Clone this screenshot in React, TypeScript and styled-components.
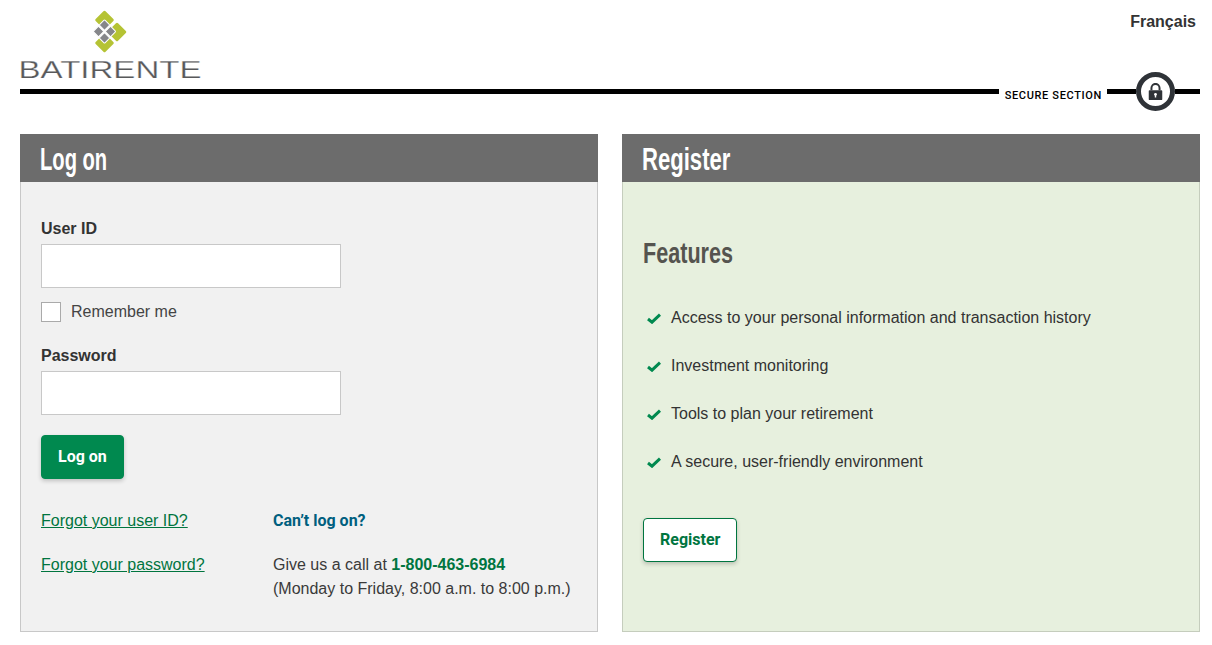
import React from 'react'
import styled, { createGlobalStyle } from 'styled-components'

const GlobalStyle = createGlobalStyle`
  html, body {
    margin: 0;
    padding: 0;
    background: #fff;
    color: #333;
    font-family: "Liberation Sans", Arial, sans-serif;
    font-size: 16px;
  }
`

const Page = styled.div`
  width: 1180px;
  height: 645px;
  padding-left: 20px;
  overflow: hidden;
`

const TopBar = styled.header`
  display: flex;
  justify-content: space-between;
  height: 82px;
`

const LogoWrap = styled.div`
  padding-top: 10px;
`

const LangLink = styled.a`
  margin: 13px 4px 0 0;
  font-weight: 700;
  line-height: 18px;
  color: #333;
`

const SecureRow = styled.div`
  display: flex;
  align-items: center;
  height: 19px;
  margin-bottom: 33px;
`

const Rule = styled.div<{ $width?: number }>`
  height: 5px;
  background: #000;
  flex: ${({ $width }) => ($width ? `0 0 ${$width}px` : '1')};
`

const SecureLabel = styled.span`
  padding: 8px 5px 0 6px;
  font-family: Roboto, sans-serif;
  font-size: 11px;
  font-weight: 500;
  letter-spacing: 0.65px;
  color: #000;
  white-space: nowrap;
`

const LockBadge = styled.div`
  flex: 0 0 39px;
  height: 39px;
  box-sizing: border-box;
  border: 5px solid #2f3338;
  border-radius: 50%;
  background: #fff;
  display: flex;
  align-items: center;
  justify-content: center;
`

const Columns = styled.main`
  display: grid;
  grid-template-columns: 578px 578px;
  gap: 24px;
`

const Panel = styled.section`
  height: 498px;
  display: flex;
  flex-direction: column;
`

const PanelTitle = styled.h2`
  margin: 0;
  height: 48px;
  padding-left: 20px;
  background: #6c6c6c;
  color: #fff;
  font-size: 32px;
  font-weight: 700;
  line-height: 50px;
`

// Oswald is not installed: a bold sans squeezed sideways stands in for it
const Squeezed = styled.span<{ $ratio: number }>`
  display: inline-block;
  transform: scaleX(${({ $ratio }) => $ratio});
  transform-origin: left center;
  white-space: nowrap;
`

const PanelBody = styled.div<{ $tone: string; $line: string }>`
  flex: 1;
  box-sizing: border-box;
  background: ${({ $tone }) => $tone};
  border: 1px solid ${({ $line }) => $line};
  border-top: 0;
  padding-left: 20px;
`

const LoginForm = styled.form`
  padding-top: 38px;
`

const FieldLabel = styled.label`
  display: block;
  font-weight: 700;
  line-height: 18px;
  margin-bottom: 6px;
`

const TextField = styled.input`
  display: block;
  box-sizing: border-box;
  width: 300px;
  height: 44px;
  border: 1px solid #c8c8c8;
  background: #fff;
  padding: 0 8px;
`

const RememberRow = styled.label`
  display: flex;
  align-items: center;
  gap: 10px;
  height: 20px;
  margin: 14px 0 25px;
  color: #444;
`

const CheckBox = styled.span`
  width: 20px;
  height: 20px;
  box-sizing: border-box;
  border: 1px solid #aaa;
  background: #fff;
`

const ActionButton = styled.button<{ $outline?: boolean }>`
  display: block;
  height: 44px;
  padding: 0 16px 2px;
  border-radius: 4px;
  border: 1px solid ${({ $outline }) => ($outline ? '#00753f' : '#00894f')};
  background: ${({ $outline }) => ($outline ? '#fff' : '#00894f')};
  color: ${({ $outline }) => ($outline ? '#00753f' : '#fff')};
  font-family: Roboto, sans-serif;
  font-size: 16px;
  font-weight: 700;
  box-shadow: 0 2px 4px rgba(0, 0, 0, 0.2);
`

const SubmitRow = styled.div`
  margin-top: 20px;
`

const HelpGrid = styled.div`
  display: grid;
  grid-template-columns: 232px 1fr;
  margin-top: 33px;
  row-gap: 26px;
  line-height: 18px;
`

const HelpLink = styled.a`
  color: #00753f;
  text-decoration: underline;
`

const HelpHeading = styled.strong`
  font-family: Roboto, sans-serif;
  font-weight: 700;
  color: #005f7f;
`

const CallText = styled.div`
  line-height: 24px;
  margin-top: -3px;
  color: #3a3a3a;
  white-space: nowrap;
`

const Phone = styled.strong`
  font-weight: 700;
  color: #00753f;
`

const FeaturesTitle = styled.h3`
  margin: 0;
  padding-top: 51px;
  font-size: 30px;
  font-weight: 700;
  line-height: 40px;
  color: #55544f;
`

const FeatureList = styled.ul`
  list-style: none;
  margin: 21px 0 32px;
  padding: 0 0 0 4px;
`

const FeatureItem = styled.li`
  display: flex;
  align-items: center;
  gap: 10px;
  height: 48px;
  color: #333;
`

const Check = () => (
  <svg width="14" height="11" viewBox="0 0 14 11">
    <path d="M1 6 L5 9.2 L13 1.6" fill="none" stroke="#00894f" strokeWidth="3" />
  </svg>
)

const Lock = () => (
  <svg width="15" height="18" viewBox="0 0 16 20">
    <path d="M3.5 8 V5.5 a4.5 4.5 0 0 1 9 0 V8" fill="none" stroke="#2f3338" strokeWidth="2.2" />
    <path
      fillRule="evenodd"
      fill="#2f3338"
      d="M1.5 8 H14.5 Q15.5 8 15.5 9 V18 Q15.5 19 14.5 19 H1.5 Q0.5 19 0.5 18 V9 Q0.5 8 1.5 8 Z M8 11 a1.6 1.6 0 0 0 -0.8 3 V16 H8.8 V14 a1.6 1.6 0 0 0 -0.8 -3 Z"
    />
  </svg>
)

const greenGems = [
  [84.5, 10],
  [97, 22],
  [84.5, 33],
]

const greyGems = [
  [84.5, 15],
  [78.5, 21.5],
  [90.5, 21.5],
  [84.5, 28],
]

const Logo = () => (
  <svg width="182" height="72" viewBox="0 0 182 72">
    {greenGems.map(([cx, cy]) => (
      <rect
        key={`${cx}-${cy}`}
        x={cx - 7}
        y={cy - 7}
        width="14"
        height="14"
        rx="1.5"
        fill="#b5c334"
        transform={`rotate(45 ${cx} ${cy})`}
      />
    ))}
    {greyGems.map(([cx, cy]) => (
      <rect
        key={`${cx}-${cy}`}
        x={cx - 3.8}
        y={cy - 3.8}
        width="7.6"
        height="7.6"
        rx="1"
        fill="#85868a"
        stroke="#fff"
        strokeWidth="1"
        transform={`rotate(45 ${cx} ${cy})`}
      />
    ))}
    <text
      x="-1.5"
      y="68"
      fontFamily="Liberation Sans, sans-serif"
      fontSize="24"
      fill="#58595b"
      stroke="#fff"
      strokeWidth="0.25"
      textLength="183"
      lengthAdjust="spacingAndGlyphs"
    >
      BATIRENTE
    </text>
  </svg>
)

const features = [
  'Access to your personal information and transaction history',
  'Investment monitoring',
  'Tools to plan your retirement',
  'A secure, user-friendly environment',
]

const App: React.FC = () => {
  return (
    <Page>
      <GlobalStyle />
      <TopBar>
        <LogoWrap>
          <Logo />
        </LogoWrap>
        <LangLink>Français</LangLink>
      </TopBar>
      <SecureRow>
        <Rule />
        <SecureLabel>SECURE SECTION</SecureLabel>
        <Rule $width={29} />
        <LockBadge>
          <Lock />
        </LockBadge>
        <Rule $width={25} />
      </SecureRow>
      <Columns>
        <Panel>
          <PanelTitle>
            <Squeezed $ratio={0.63}>Log on</Squeezed>
          </PanelTitle>
          <PanelBody $tone="#f1f1f1" $line="#c8c8c8">
            <LoginForm>
              <FieldLabel>User ID</FieldLabel>
              <TextField />
              <RememberRow>
                <CheckBox />
                Remember me
              </RememberRow>
              <FieldLabel>Password</FieldLabel>
              <TextField />
              <SubmitRow>
                <ActionButton type="button">Log on</ActionButton>
              </SubmitRow>
              <HelpGrid>
                <HelpLink>Forgot your user ID?</HelpLink>
                <HelpHeading>Can’t log on?</HelpHeading>
                <HelpLink>Forgot your password?</HelpLink>
                <CallText>
                  Give us a call at <Phone>1-800-463-6984</Phone>
                  <br />
                  (Monday to Friday, 8:00 a.m. to 8:00 p.m.)
                </CallText>
              </HelpGrid>
            </LoginForm>
          </PanelBody>
        </Panel>
        <Panel>
          <PanelTitle>
            <Squeezed $ratio={0.69}>Register</Squeezed>
          </PanelTitle>
          <PanelBody $tone="#e7f0de" $line="#c5cdbd">
            <FeaturesTitle>
              <Squeezed $ratio={0.72}>Features</Squeezed>
            </FeaturesTitle>
            <FeatureList>
              {features.map((item) => (
                <FeatureItem key={item}>
                  <Check />
                  {item}
                </FeatureItem>
              ))}
            </FeatureList>
            <ActionButton type="button" $outline>
              Register
            </ActionButton>
          </PanelBody>
        </Panel>
      </Columns>
    </Page>
  )
}

export default App
